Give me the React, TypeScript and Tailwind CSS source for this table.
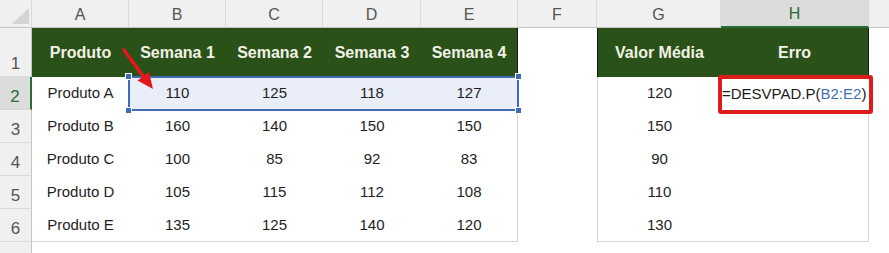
import React from "react";

const cols = ["A", "B", "C", "D", "E", "F", "G", "H"];

const data: [string, number, number, number, number, number][] = [
  ["Produto A", 110, 125, 118, 127, 120],
  ["Produto B", 160, 140, 150, 150, 150],
  ["Produto C", 100, 85, 92, 83, 90],
  ["Produto D", 105, 115, 112, 108, 110],
  ["Produto E", 135, 125, 140, 120, 130],
];

const weeks = ["Semana 1", "Semana 2", "Semana 3", "Semana 4"];

function ColHeader({ label }: { label: string }) {
  if (label === "H") {
    return (
      <div className="flex items-center justify-center pt-[2px] bg-[#dcdcdc] border-r border-[#d4d4d4] border-b-2 border-b-[#2b6b36] text-[#2b6b36] text-[16px]">
        {label}
      </div>
    );
  }
  return (
    <div className="flex items-center justify-center pt-[2px] bg-[#f0f0f0] border-r border-[#dadada] border-b border-b-[#c4c4c4] text-[#555] text-[16px]">
      {label}
    </div>
  );
}

function RowHeader({ n, active }: { n: number; active?: boolean }) {
  if (active) {
    return (
      <div className="flex items-end justify-center pb-0 bg-[#dcdcdc] border-r-2 border-r-[#2b6b36] border-b border-b-[#d4d4d4] text-[#2b6b36] text-[17px]">
        {n}
      </div>
    );
  }
  return (
    <div className="flex items-end justify-center pb-0 bg-[#f0f0f0] border-r border-r-[#c4c4c4] border-b border-b-[#dadada] text-[#555] text-[17px]">
      {n}
    </div>
  );
}

function Head({ children, edge }: { children: React.ReactNode; edge?: "l" | "r" }) {
  const side = edge === "r" ? "border-r border-r-[#1a1a1a]" : edge === "l" ? "border-l border-l-[#1a1a1a]" : "";
  return (
    <div className={`flex items-center justify-center bg-[#2a5118] text-[#f1f1e6] font-bold text-[16px] ${side}`}>
      {children}
    </div>
  );
}

function Selection() {
  // B2:E2 outline with the four corner handles, laid over the row
  return (
    <div className="pointer-events-none absolute z-10 -left-[1px] -top-[1px] w-[391px] h-[35px] border-2 border-[#3f6cb2]">
      <span className="absolute -left-[5px] -top-[5px] w-[7px] h-[7px] bg-[#3f6cb2] border border-white" />
      <span className="absolute -right-[5px] -top-[5px] w-[7px] h-[7px] bg-[#3f6cb2] border border-white" />
      <span className="absolute -left-[5px] -bottom-[5px] w-[7px] h-[7px] bg-[#3f6cb2] border border-white" />
      <span className="absolute -right-[5px] -bottom-[5px] w-[7px] h-[7px] bg-[#3f6cb2] border border-white" />
    </div>
  );
}

export default function App() {
  return (
    <div className="relative w-[889px] h-[253px] overflow-hidden bg-white font-['Liberation_Sans',Arial,sans-serif] text-[#1e1e1e]">
      <div className="grid grid-cols-[32px_97px_97px_97px_98px_97px_79px_124px_148px_1fr] grid-rows-[28px_49px_33px_33px_33px_33px_33px_33px]">
        {/* corner */}
        <div className="relative bg-[#f0f0f0] border-r border-[#dadada] border-b border-b-[#c4c4c4]">
          <svg className="absolute left-[12px] top-[8px]" width="17" height="16" viewBox="0 0 17 16">
            <polygon points="17,0 17,16 0,16" fill="#d4d4d4" />
          </svg>
        </div>
        {cols.map((c) => (
          <ColHeader key={c} label={c} />
        ))}
        <div className="bg-[#f0f0f0] border-b border-b-[#c4c4c4]" />

        {/* row 1 */}
        <RowHeader n={1} />
        <Head>Produto</Head>
        {weeks.map((w, i) => (
          <Head key={w} edge={i === 3 ? "r" : undefined}>
            {w}
          </Head>
        ))}
        <div />
        <Head edge="l">Valor Média</Head>
        <Head edge="r">Erro</Head>
        <div />

        {/* rows 2-6 */}
        {data.map((r, i) => {
          const first = i === 0;
          const last = i === data.length - 1;
          const bottom = last ? "border-b border-b-[#d4d4d4]" : "";
          const fill = first ? "bg-[#e9eef8]" : "";
          return (
            <React.Fragment key={r[0]}>
              <RowHeader n={i + 2} active={first} />
              <div className={`flex items-center justify-center text-[15px] ${bottom}`}>{r[0]}</div>
              <div className={`relative flex items-center justify-center text-[15px] ${fill} ${bottom}`}>
                {r[1]}
                {first && <Selection />}
              </div>
              <div className={`flex items-center justify-center text-[15px] ${fill} ${bottom}`}>{r[2]}</div>
              <div className={`flex items-center justify-center text-[15px] ${fill} ${bottom}`}>{r[3]}</div>
              <div className={`flex items-center justify-center text-[15px] border-r border-r-[#d4d4d4] ${fill} ${bottom}`}>{r[4]}</div>
              <div />
              <div className={`flex items-center justify-center text-[15px] border-l border-l-[#d4d4d4] ${bottom}`}>{r[5]}</div>
              {first ? (
                <div className="relative z-10 -ml-[3px] -mr-[4px] -mt-[2px] -mb-[4px] flex items-center border-4 border-[#dd1c1c] rounded-[3px] bg-white text-[15px] text-[#1a1a1a] whitespace-nowrap">
                  <span>
                    =DESVPAD.P(<span className="text-[#3f6fba]">B2:E2</span>)
                  </span>
                </div>
              ) : (
                <div className={`border-r border-r-[#d4d4d4] ${bottom}`} />
              )}
              <div />
            </React.Fragment>
          );
        })}

        {/* row 7 */}
        <RowHeader n={7} />
        <div className="col-span-9" />
      </div>

      {/* red arrow */}
      <svg className="pointer-events-none absolute left-0 top-0 z-20" width="889" height="253" viewBox="0 0 889 253">
        <line x1="124" y1="50" x2="143" y2="76" stroke="#e5161c" strokeWidth="3.5" strokeLinecap="round" />
        <polygon points="153,89 137.5,80.5 149,72" fill="#e5161c" />
      </svg>
    </div>
  );
}
